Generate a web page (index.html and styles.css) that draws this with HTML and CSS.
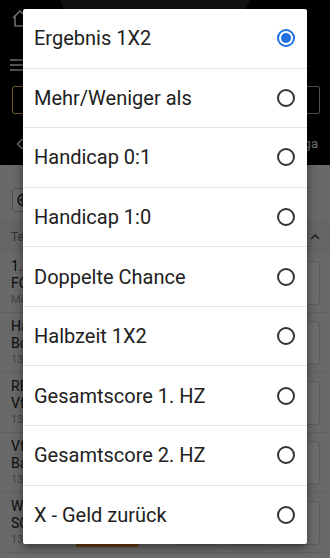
FILE: index.html
```html
<!DOCTYPE html>
<html lang="de">
<head>
<meta charset="utf-8">
<link rel="stylesheet" href="styles.css">
</head>
<body>
<div class="app" aria-hidden="true">
  <header class="topbar">
    <div class="bar-row first">
      <svg class="home" width="20" height="20" viewBox="0 0 20 20"><path d="M3 10 L10 3 L17 10 M5 8.5 V18 H15 V8.5" fill="none" stroke="#fff" stroke-width="1.6"/></svg>
      <div class="pill"></div>
    </div>
    <div class="bar-row menu">
      <svg width="14" height="12" viewBox="0 0 14 12"><path d="M0 1H14M0 6H14M0 11H14" stroke="#fff" stroke-width="1.5"/></svg>
    </div>
    <div class="bar-row tabs">
      <div class="tab-gold"></div>
      <div class="tab-grey"></div>
    </div>
    <div class="bar-row league">
      <svg width="8" height="12" viewBox="0 0 8 12"><path d="M6.5 1 L1.5 6 L6.5 11" fill="none" stroke="#fff" stroke-width="1.5"/></svg>
      <span class="league-name">Liga</span>
    </div>
  </header>
  <main class="content">
    <div class="filter">
      <div class="globe-box">
        <svg width="14" height="14" viewBox="0 0 14 14"><circle cx="7" cy="7" r="6" fill="none" stroke="#222" stroke-width="1.4"/><path d="M1 7H13M7 1C4 4 4 10 7 13M7 1C10 4 10 10 7 13" fill="none" stroke="#222" stroke-width="1.1"/></svg>
      </div>
    </div>
    <div class="section">
      <span class="section-title">Te</span>
      <svg width="10" height="8" viewBox="0 0 10 8"><path d="M1 6 L5 2 L9 6" fill="none" stroke="#444" stroke-width="1.5"/></svg>
    </div>
    <div class="match">
      <div class="teams"><span>1.</span><span>FC</span><span class="date">Mo</span></div>
      <div class="odds"><span></span><span></span><span></span></div>
    </div>
    <div class="match">
      <div class="teams"><span>Ha</span><span>Bo</span><span class="date">13.</span></div>
      <div class="odds"><span></span><span></span><span></span></div>
    </div>
    <div class="match">
      <div class="teams"><span>RB</span><span>Vf</span><span class="date">13.</span></div>
      <div class="odds"><span></span><span></span><span></span></div>
    </div>
    <div class="match">
      <div class="teams"><span>Vf</span><span>Ba</span><span class="date">13.</span></div>
      <div class="odds"><span></span><span></span><span></span></div>
    </div>
    <div class="match">
      <div class="teams"><span>We</span><span>SC</span><span class="date">13.<em class="badge"></em></span></div>
      <div class="odds"><span></span><span></span><span></span></div>
    </div>
  </main>
</div>

<div class="overlay">
  <div class="dialog">
    <div class="option"><span>Ergebnis 1X2</span><i class="radio checked"></i></div>
    <div class="option"><span>Mehr/Weniger als</span><i class="radio"></i></div>
    <div class="option"><span>Handicap 0:1</span><i class="radio"></i></div>
    <div class="option"><span>Handicap 1:0</span><i class="radio"></i></div>
    <div class="option"><span>Doppelte Chance</span><i class="radio"></i></div>
    <div class="option"><span>Halbzeit 1X2</span><i class="radio"></i></div>
    <div class="option"><span>Gesamtscore 1. HZ</span><i class="radio"></i></div>
    <div class="option"><span>Gesamtscore 2. HZ</span><i class="radio"></i></div>
    <div class="option"><span>X - Geld zurück</span><i class="radio"></i></div>
  </div>
</div>
</body>
</html>
```

FILE: styles.css
```css
* { box-sizing: border-box; }
html, body {
  margin: 0;
  padding: 0;
}
body {
  width: 330px;
  height: 558px;
  overflow: hidden;
  position: relative;
  font-family: Roboto, "Liberation Sans", sans-serif;
  background: #efefef;
}
.app {
  display: flex;
  flex-direction: column;
  height: 558px;
}
.topbar {
  background: #000;
  height: 165px;
  display: flex;
  flex-direction: column;
}
.bar-row {
  display: flex;
  align-items: center;
  padding: 0 10px;
}
.bar-row.first {
  height: 50px;
  align-items: flex-start;
  padding-top: 8px;
  gap: 30px;
}
.pill {
  width: 190px;
  height: 14px;
  margin-top: -10px;
  border-radius: 0 0 14px 14px;
  background: #2a2a2a;
}
.bar-row.menu {
  height: 30px;
}
.bar-row.tabs {
  height: 42px;
  justify-content: space-between;
  padding: 4px 10px 6px 12px;
}
.tab-gold {
  width: 120px;
  height: 28px;
  border: 1.5px solid #ffd34a;
  border-radius: 3px;
}
.tab-grey {
  width: 90px;
  height: 28px;
  border: 1.5px solid #bbb;
  border-radius: 3px;
}
.bar-row.league {
  height: 43px;
  justify-content: space-between;
  padding: 0 12px 0 16px;
}
.league-name {
  color: #fff;
  font-size: 13px;
}
.content {
  flex: 1;
  display: flex;
  flex-direction: column;
}
.filter {
  padding: 23px 10px 0 12px;
  height: 55px;
}
.globe-box {
  width: 120px;
  height: 24px;
  border: 1px solid #bbb;
  border-radius: 3px;
  display: flex;
  align-items: center;
  padding-left: 4px;
  background: #f7f7f7;
}
.section {
  height: 33px;
  display: flex;
  align-items: center;
  justify-content: space-between;
  padding: 0 10px 0 11px;
  background: #e6e6e6;
  font-size: 12px;
  color: #777;
}
.match {
  height: 60px;
  display: flex;
  justify-content: space-between;
  align-items: center;
  padding: 0 10px 0 11px;
  border-bottom: 1px solid #d8d8d8;
}
.teams {
  display: flex;
  flex-direction: column;
  font-size: 14px;
  line-height: 17px;
  color: #222;
}
.teams .date {
  font-size: 11px;
  line-height: 15px;
  color: #999;
}
.badge {
  display: inline-block;
  vertical-align: middle;
  margin-left: 50px;
  width: 62px;
  height: 13px;
  background: #f08a1c;
}
.odds {
  display: flex;
  gap: 6px;
}
.odds span {
  width: 44px;
  height: 44px;
  border: 1px solid #d0d0d0;
  border-radius: 4px;
  background: #f8f8f8;
}

.overlay {
  position: absolute;
  inset: 0;
  background: rgba(0, 0, 0, 0.56);
  display: flex;
  justify-content: center;
  align-items: flex-start;
  padding-top: 9px;
}
.dialog {
  width: 284px;
  height: 535px;
  background: #fff;
  border-radius: 2px;
  box-shadow: 0 3px 10px rgba(0, 0, 0, 0.5);
  display: flex;
  flex-direction: column;
}
.option {
  flex: 1;
  display: flex;
  align-items: center;
  justify-content: space-between;
  padding: 0 12px 0 11px;
  border-bottom: 1px solid #e3e3e3;
  font-size: 20px;
  color: #212121;
}
.option:last-child {
  border-bottom: none;
}
.radio {
  width: 18px;
  height: 18px;
  border: 2px solid #333;
  border-radius: 50%;
  display: flex;
  align-items: center;
  justify-content: center;
}
.radio.checked {
  border-color: #1f72e0;
}
.radio.checked::after {
  content: "";
  width: 10px;
  height: 10px;
  border-radius: 50%;
  background: #1f72e0;
}
```
